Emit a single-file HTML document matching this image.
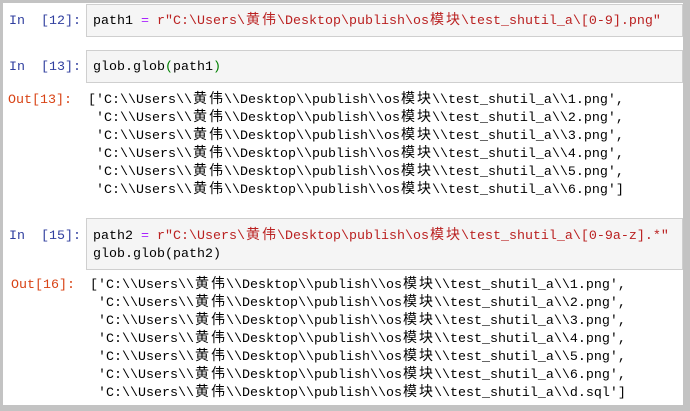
<!DOCTYPE html>
<html><head><meta charset="utf-8"><style>
*{margin:0;padding:0;box-sizing:border-box}
body{width:690px;height:411px;background:#c3c3c3;position:relative;overflow:hidden;font-family:"Liberation Mono","Noto Sans CJK SC",monospace;font-size:13.33px}
#pg{position:absolute;left:3px;top:3px;width:680px;height:402px;background:#fff}
.box{position:absolute;left:86px;width:597px;background:#f5f5f5;border:1px solid #cfcfcf;}
.l{position:absolute;white-space:pre;line-height:18px}
.in{color:#303f9f}.out{color:#d84315}
.s{color:#ba2121}.o{color:#aa22ff}.p{color:#008000}
c{display:inline-block;width:16px;height:18px;text-align:center;font-family:"Noto Sans CJK SC",sans-serif;font-size:14px;line-height:18px;vertical-align:top;position:relative;top:-3px}
</style></head><body><div id="pg"></div>
<div class="box" style="top:4px;height:33px"></div>
<div class="box" style="top:50px;height:33px"></div>
<div class="box" style="top:218px;height:52px"></div>
<div class="l in" style="left:9px;top:13px">In  [12]:</div>
<div class="l" style="left:93px;top:13px">path1 <span class="o">=</span> <span class="s">r"C:\Users\<c>黄</c><c>伟</c>\Desktop\publish\os<c>模</c><c>块</c>\test_shutil_a\[0-9].png"</span></div>
<div class="l in" style="left:9px;top:59px">In  [13]:</div>
<div class="l" style="left:93px;top:59px">glob.glob<span class="p">(</span>path1<span class="p">)</span></div>
<div class="l out" style="left:8px;top:92px">Out[13]:</div>
<div class="l" style="left:88px;top:92px">['C:\\Users\\<c>黄</c><c>伟</c>\\Desktop\\publish\\os<c>模</c><c>块</c>\\test_shutil_a\\1.png',
 'C:\\Users\\<c>黄</c><c>伟</c>\\Desktop\\publish\\os<c>模</c><c>块</c>\\test_shutil_a\\2.png',
 'C:\\Users\\<c>黄</c><c>伟</c>\\Desktop\\publish\\os<c>模</c><c>块</c>\\test_shutil_a\\3.png',
 'C:\\Users\\<c>黄</c><c>伟</c>\\Desktop\\publish\\os<c>模</c><c>块</c>\\test_shutil_a\\4.png',
 'C:\\Users\\<c>黄</c><c>伟</c>\\Desktop\\publish\\os<c>模</c><c>块</c>\\test_shutil_a\\5.png',
 'C:\\Users\\<c>黄</c><c>伟</c>\\Desktop\\publish\\os<c>模</c><c>块</c>\\test_shutil_a\\6.png']</div>
<div class="l in" style="left:9px;top:228px">In  [15]:</div>
<div class="l" style="left:93px;top:228px">path2 <span class="o">=</span> <span class="s">r"C:\Users\<c>黄</c><c>伟</c>\Desktop\publish\os<c>模</c><c>块</c>\test_shutil_a\[0-9a-z].*"</span>
glob.glob(path2)</div>
<div class="l out" style="left:11px;top:277px">Out[16]:</div>
<div class="l" style="left:90px;top:277px">['C:\\Users\\<c>黄</c><c>伟</c>\\Desktop\\publish\\os<c>模</c><c>块</c>\\test_shutil_a\\1.png',
 'C:\\Users\\<c>黄</c><c>伟</c>\\Desktop\\publish\\os<c>模</c><c>块</c>\\test_shutil_a\\2.png',
 'C:\\Users\\<c>黄</c><c>伟</c>\\Desktop\\publish\\os<c>模</c><c>块</c>\\test_shutil_a\\3.png',
 'C:\\Users\\<c>黄</c><c>伟</c>\\Desktop\\publish\\os<c>模</c><c>块</c>\\test_shutil_a\\4.png',
 'C:\\Users\\<c>黄</c><c>伟</c>\\Desktop\\publish\\os<c>模</c><c>块</c>\\test_shutil_a\\5.png',
 'C:\\Users\\<c>黄</c><c>伟</c>\\Desktop\\publish\\os<c>模</c><c>块</c>\\test_shutil_a\\6.png',
 'C:\\Users\\<c>黄</c><c>伟</c>\\Desktop\\publish\\os<c>模</c><c>块</c>\\test_shutil_a\\d.sql']</div>
</body></html>
